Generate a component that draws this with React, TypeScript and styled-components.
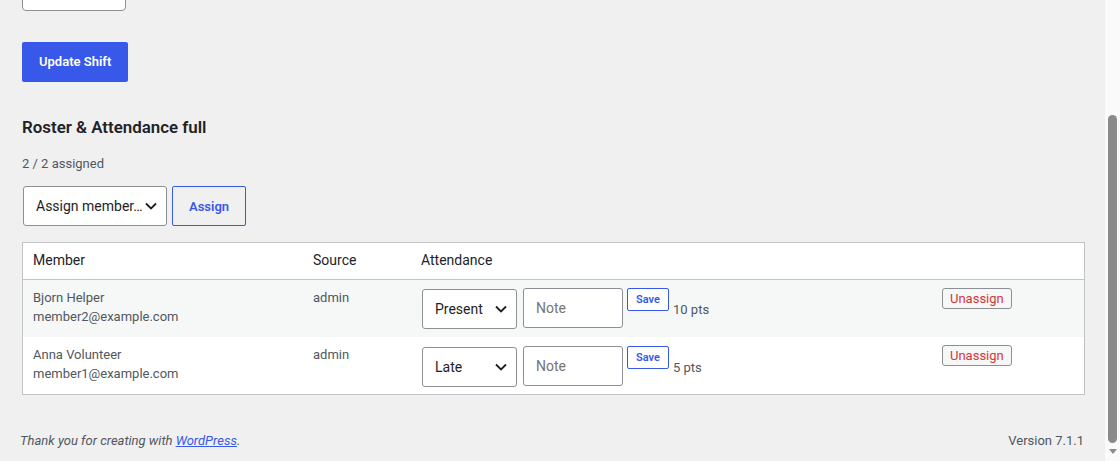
import React from "react";
import styled, { createGlobalStyle } from "styled-components";

const GlobalStyle = createGlobalStyle`
  html, body {
    margin: 0;
    padding: 0;
    background: #f0f0f1;
    font-family: Roboto, "Liberation Sans", sans-serif;
    color: #3c434a;
  }
`;

const Frame = styled.div`
  display: flex;
  height: 461px;
  overflow: hidden;
`;

const Main = styled.div`
  flex: 1;
  display: flex;
  flex-direction: column;
  min-width: 0;
`;

const Content = styled.div`
  display: flex;
  flex-direction: column;
  align-items: flex-start;
  padding: 0 20px 0 22px;
`;

const TextField = styled.div`
  box-sizing: border-box;
  width: 104px;
  height: 30px;
  margin-top: -19px;
  background: #fff;
  border: 1px solid #8c8f94;
  border-radius: 4px;
`;

const PrimaryButton = styled.button`
  box-sizing: border-box;
  height: 40px;
  margin-top: 31px;
  padding: 0 17px;
  border: 0;
  border-radius: 2px;
  background: #3858e9;
  color: #fff;
  font-family: inherit;
  font-size: 13px;
  font-weight: 600;
  line-height: 38px;
`;

const Heading = styled.h2`
  margin: 34px 0 0;
  font-size: 16.9px;
  line-height: 23.6px;
  font-weight: 600;
  color: #1d2327;
`;

const Count = styled.p`
  margin: 14px 0 0;
  font-size: 13px;
  line-height: 19.5px;
  color: #50575e;
`;

const AssignRow = styled.div`
  display: flex;
  align-items: center;
  gap: 5px;
  margin-top: 13px;
`;

const Select = styled.div<{ $width: number }>`
  box-sizing: border-box;
  display: flex;
  align-items: center;
  justify-content: space-between;
  width: ${(p) => p.$width}px;
  height: 40px;
  margin-left: 1px;
  padding: 0 9px 0 12px;
  background: #fff;
  border: 1px solid #8c8f94;
  border-radius: 3px;
  font-size: 14px;
  color: #1e1e1e;
`;

const SelectText = styled.span`
  overflow: hidden;
  white-space: nowrap;
  text-overflow: ellipsis;
`;

const OutlineButton = styled.button`
  box-sizing: border-box;
  height: 40px;
  padding: 0 16px;
  background: transparent;
  border: 1px solid #3858e9;
  border-radius: 2px;
  color: #3858e9;
  font-family: inherit;
  font-size: 13px;
  font-weight: 600;
`;

const Table = styled.div`
  box-sizing: border-box;
  width: 100%;
  margin-top: 16px;
  background: #fff;
  border: 1px solid #c3c4c7;
`;

const Row = styled.div<{ $striped?: boolean; $head?: boolean }>`
  display: grid;
  grid-template-columns: 280px 108px 521px 1fr;
  height: ${(p) => (p.$head ? "36px" : "57px")};
  background: ${(p) => (p.$striped ? "#f6f7f7" : "#fff")};
  border-bottom: ${(p) => (p.$head ? "1px solid #c3c4c7" : "0")};
`;

const HeadCell = styled.div`
  padding: 8px 10px;
  font-size: 14px;
  line-height: 19.6px;
  color: #1d2327;
`;

const Cell = styled.div`
  padding: 8px 10px;
  font-size: 13px;
  line-height: 19px;
  color: #50575e;
`;

const AttendanceCell = styled.div<{ $offset: number }>`
  display: flex;
  align-items: flex-start;
  padding: ${(p) => p.$offset}px 10px 0 10px;
`;

const NoteInput = styled.div`
  box-sizing: border-box;
  width: 100px;
  height: 40px;
  margin: -1px 0 0 6px;
  padding: 0 12px;
  display: flex;
  align-items: center;
  background: #fff;
  border: 1px solid #8c8f94;
  border-radius: 3px;
  font-size: 14px;
  color: #757575;
`;

const SmallButton = styled.button`
  box-sizing: border-box;
  height: 23px;
  width: 42px;
  margin: -1px 0 0 4px;
  padding: 0;
  background: #fff;
  border: 1px solid #3858e9;
  border-radius: 2px;
  color: #3858e9;
  font-family: inherit;
  font-size: 11px;
  font-weight: 600;
`;

const Points = styled.span`
  margin: 11px 0 0 4px;
  font-size: 13px;
  line-height: 19.5px;
  color: #50575e;
`;

const DangerButton = styled.button`
  box-sizing: border-box;
  height: 21px;
  padding: 0 7px;
  background: #f6f7f7;
  border: 1px solid #8c8f94;
  border-radius: 3px;
  color: #d63638;
  font-family: inherit;
  font-size: 13px;
  line-height: 19px;
`;

const ActionCell = styled.div`
  padding: 8px 10px;
`;

const Footer = styled.div`
  display: flex;
  justify-content: space-between;
  align-items: center;
  margin-top: 36px;
  padding: 0 21px 0 20px;
  font-size: 13px;
  line-height: 19.5px;
  color: #50575e;
`;

const Thanks = styled.span`
  font-style: italic;

  a {
    color: #3858e9;
  }
`;

const Scrollbar = styled.div`
  width: 15px;
  flex-shrink: 0;
  background: #fafafa;
  display: flex;
  flex-direction: column;
  align-items: center;
`;

const Thumb = styled.div`
  width: 9px;
  height: 328px;
  margin-top: 115px;
  border-radius: 5px;
  background: #8a8a8a;
`;

const Arrow = styled.div`
  margin-top: 6px;
  width: 0;
  height: 0;
  border-left: 4.5px solid transparent;
  border-right: 4.5px solid transparent;
  border-top: 5px solid #8a8a8a;
`;

const Chevron = () => (
  <svg width="12" height="8" viewBox="0 0 12 8" fill="none">
    <path d="M1 1.5l5 5 5-5" stroke="#1e1e1e" strokeWidth="1.8" />
  </svg>
);

const members = [
  { name: "Bjorn Helper", email: "member2@example.com", status: "Present", pts: "10 pts" },
  { name: "Anna Volunteer", email: "member1@example.com", status: "Late", pts: "5 pts" },
];

export default function App() {
  return (
    <>
      <GlobalStyle />
      <Frame>
        <Main>
          <Content>
            <TextField />
            <PrimaryButton>Update Shift</PrimaryButton>
            <Heading>Roster &amp; Attendance full</Heading>
            <Count>2 / 2 assigned</Count>
            <AssignRow>
              <Select $width={144}>
                <SelectText>Assign member…</SelectText>
                <Chevron />
              </Select>
              <OutlineButton>Assign</OutlineButton>
            </AssignRow>
            <Table>
              <Row $head>
                <HeadCell>Member</HeadCell>
                <HeadCell>Source</HeadCell>
                <HeadCell>Attendance</HeadCell>
                <HeadCell />
              </Row>
              {members.map((m, i) => (
                <Row key={m.email} $striped={i === 0}>
                  <Cell>
                    {m.name}
                    <br />
                    {m.email}
                  </Cell>
                  <Cell>admin</Cell>
                  <AttendanceCell $offset={i === 0 ? 9 : 10}>
                    <Select $width={95}>
                      <SelectText>{m.status}</SelectText>
                      <Chevron />
                    </Select>
                    <NoteInput>Note</NoteInput>
                    <SmallButton>Save</SmallButton>
                    <Points>{m.pts}</Points>
                  </AttendanceCell>
                  <ActionCell>
                    <DangerButton>Unassign</DangerButton>
                  </ActionCell>
                </Row>
              ))}
            </Table>
          </Content>
          <Footer>
            <Thanks>
              Thank you for creating with <a href="#">WordPress</a>.
            </Thanks>
            <span>Version 7.1.1</span>
          </Footer>
        </Main>
        <Scrollbar>
          <Thumb />
          <Arrow />
        </Scrollbar>
      </Frame>
    </>
  );
}
